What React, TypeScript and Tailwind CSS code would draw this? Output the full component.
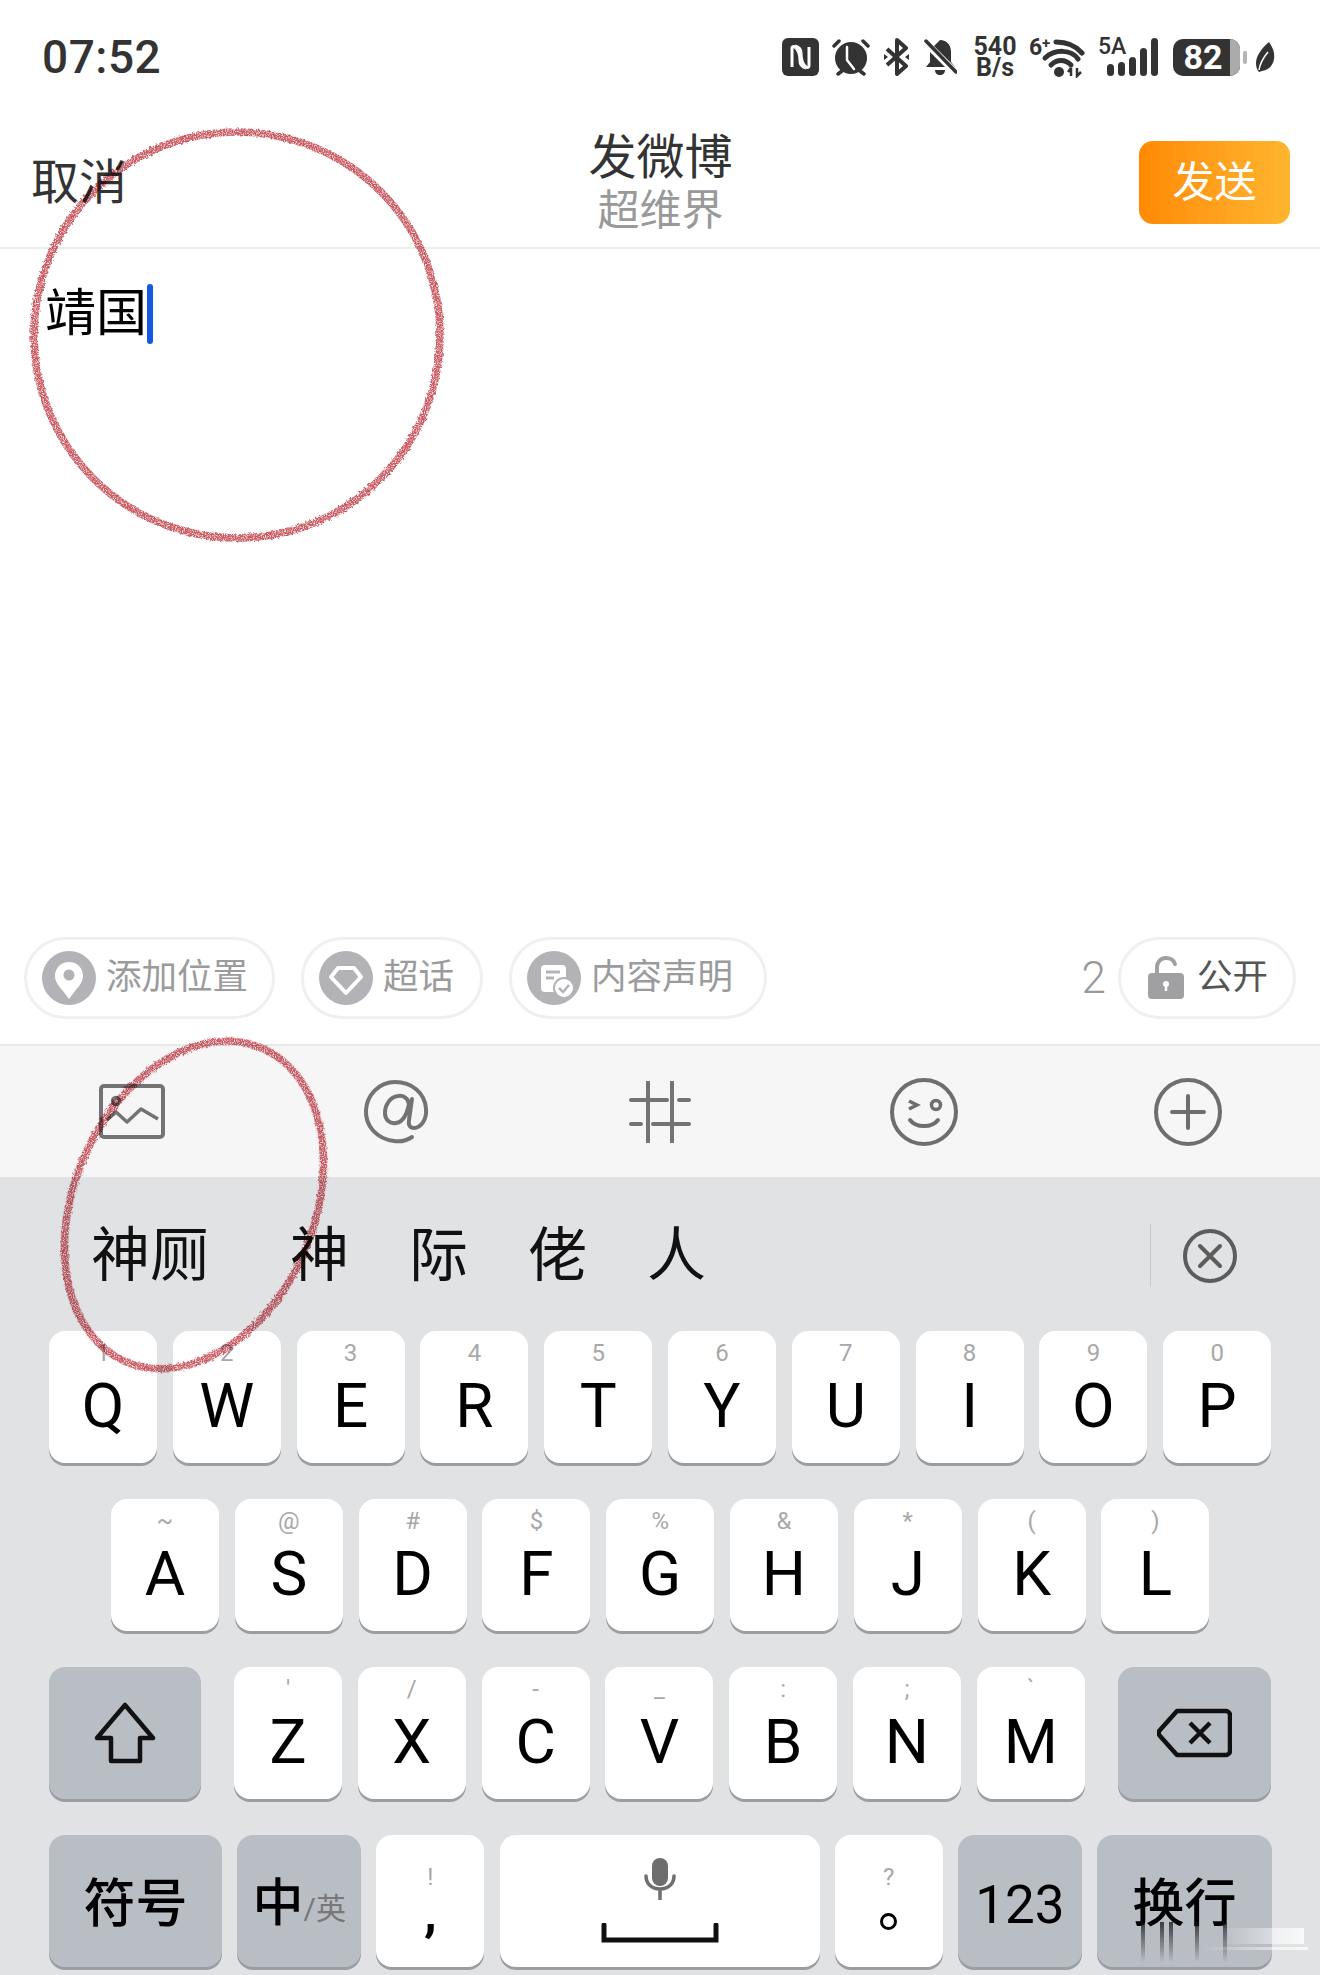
import type { ReactNode } from "react";

const row1 = [
  ["1", "Q"], ["2", "W"], ["3", "E"], ["4", "R"], ["5", "T"],
  ["6", "Y"], ["7", "U"], ["8", "I"], ["9", "O"], ["0", "P"],
];
const row2 = [
  ["~", "A"], ["@", "S"], ["#", "D"], ["$", "F"], ["%", "G"],
  ["&", "H"], ["*", "J"], ["(", "K"], [")", "L"],
];
const row3 = [
  ["'", "Z"], ["/", "X"], ["-", "C"], ["_", "V"], [":", "B"], [";", "N"], ["`", "M"],
];

function LetterKey({ hint, letter }: { hint: string; letter: string }) {
  return (
    <div className="flex h-[132px] w-[108px] shrink-0 flex-col items-center rounded-[16px] bg-white pt-2 shadow-[0_3px_0_#9b9da3]">
      <span className="h-7 text-[24px] leading-7 text-[#a8a8a8]">{hint}</span>
      <span className="h-[78px] text-[62px] leading-[78px] text-black">{letter}</span>
    </div>
  );
}

function GrayKey({ width, children }: { width: string; children: ReactNode }) {
  return (
    <div className={`flex h-[132px] shrink-0 items-center justify-center rounded-[16px] bg-[#b9bdc4] shadow-[0_3px_0_#9b9da3] ${width}`}>
      {children}
    </div>
  );
}

function PunctKey({ hint, children }: { hint: string; children: ReactNode }) {
  return (
    <div className="flex h-[132px] w-[108px] shrink-0 flex-col items-center rounded-[16px] bg-white pt-[28px] shadow-[0_3px_0_#9b9da3]">
      <span className="h-7 text-[24px] leading-7 text-[#a8a8a8]">{hint}</span>
      {children}
    </div>
  );
}

function Chip({ icon, label, width }: { icon: ReactNode; label: string; width: string }) {
  return (
    <div className={`flex h-[82px] items-center gap-[10px] rounded-full border-[3px] border-[#f0f0f0] pl-[15px] ${width}`}>
      {icon}
      <span className="text-[35.5px] leading-none text-[#9b9b9d]">{label}</span>
    </div>
  );
}

function StatusIcons() {
  return (
    <div className="flex items-center gap-[13px]">
      {/* nfc */}
      <svg width="37" height="38" viewBox="0 0 37 38">
        <rect width="37" height="38" rx="6" fill="#333" />
        <path d="M10 29V10c0-1.500 1.500-2 3-1 4 3 5 8 5 14 0 3 2 6 6 7" fill="none" stroke="#fff" strokeWidth="3" />
        <path d="M27 9v19c0 1.500-1.500 2-3 1-4-3-5-8-5-14 0-3-2-6-6-7" fill="none" stroke="#fff" strokeWidth="3" />
      </svg>
      {/* alarm */}
      <svg width="38" height="38" viewBox="0 0 38 38">
        <circle cx="19" cy="20" r="16" fill="#333" />
        <path d="M15 9v13l7 9" fill="none" stroke="#fff" strokeWidth="2.500" strokeLinecap="round" strokeLinejoin="round" />
        <path d="M2 8l5-5M36 8l-5-5M6 36l4-3M32 36l-4-3" stroke="#333" strokeWidth="3.500" strokeLinecap="round" />
      </svg>
      {/* bluetooth */}
      <svg width="27" height="38" viewBox="0 0 27 38">
        <path d="M4 11l19 17-9 8V2l9 8L4 27" fill="none" stroke="#333" strokeWidth="4" strokeLinejoin="round" />
        <path d="M1 16l4 3-4 3zM26 16l-4 3 4 3z" fill="#333" />
      </svg>
      {/* bell off */}
      <svg width="34" height="38" viewBox="0 0 34 38">
        <path d="M17 2c7 0 11 5 11 12v10l4 5H3l4-5V12z" fill="#333" />
        <path d="M12 32h10c0 3-2 5-5 5s-5-2-5-5z" fill="#333" />
        <path d="M2 4l30 30" stroke="#fff" strokeWidth="7" />
        <path d="M3 3l30 31" stroke="#333" strokeWidth="3.500" strokeLinecap="round" />
      </svg>
      {/* speed */}
      <div className="ml-[4px] flex w-[42px] flex-col items-center text-[25px] font-bold leading-[21px] text-[#333]">
        <span>540</span>
        <span>B/s</span>
      </div>
      {/* wifi */}
      <div className="relative h-[42px] w-[56px]">
        <span className="absolute left-0 top-0 text-[23px] font-bold leading-[24px] text-[#333]">6</span>
        <span className="absolute left-[13px] top-0 text-[15px] font-bold leading-[15px] text-[#333]">+</span>
        <svg width="56" height="42" viewBox="0 0 56 42">
          <path d="M27 6c10 0 20 4 26 11" fill="none" stroke="#333" strokeWidth="5" strokeLinecap="round" />
          <path d="M16 22c10-9 26-9 33 1" fill="none" stroke="#333" strokeWidth="5" strokeLinecap="round" />
          <path d="M22 29c6-6 14-6 20 0" fill="none" stroke="#333" strokeWidth="5" strokeLinecap="round" />
          <circle cx="30" cy="36" r="5" fill="#333" />
          <path d="M42 32v8M39 36l3-4M48 32v8l4-4" fill="none" stroke="#333" strokeWidth="2.500" />
        </svg>
      </div>
      {/* signal */}
      <div className="relative h-[40px] w-[62px]">
        <span className="absolute left-0 top-0 text-[23px] font-medium leading-[20px] text-[#333]">5A</span>
        <svg width="62" height="40" viewBox="0 0 62 40">
          <rect x="9" y="27" width="7" height="12" rx="3.500" fill="#333" />
          <rect x="20" y="25" width="7" height="14" rx="3.500" fill="#333" />
          <rect x="31" y="20" width="7" height="19" rx="3.500" fill="#333" />
          <rect x="42" y="11" width="7" height="28" rx="3.500" fill="#333" />
          <rect x="53" y="1" width="7" height="38" rx="3.500" fill="#333" />
        </svg>
      </div>
      {/* battery */}
      <div className="flex items-center gap-[3px]">
        <div className="flex h-[37px] w-[67px] rounded-[10px] bg-[#333]">
          <div className="flex flex-1 items-center justify-center pl-[3px] text-[34px] font-bold leading-[37px] text-white">82</div>
          <div className="w-[10px] rounded-r-[10px] bg-[#ababab]" />
        </div>
        <div className="h-[13px] w-[4px] rounded-full bg-[#b5b5b5]" />
      </div>
      {/* leaf */}
      <svg className="-ml-[4px]" width="19" height="30" viewBox="0 0 19 30">
        <path d="M13 0c4 6 6 11 5 17-1 7-6 11-12 12l-3 1c-2-2-3-5-3-9C0 13 7 5 13 0z" fill="#333" />
        <path d="M3 28c1-7 4-12 9-18" fill="none" stroke="#fff" strokeWidth="1.500" />
      </svg>
    </div>
  );
}

export default function App() {
  return (
    <div className="relative h-[1975px] w-[1320px] overflow-hidden bg-white font-['Roboto','Noto_Sans_CJK_SC',sans-serif]">
      {/* status bar */}
      <div className="flex h-[100px] items-center justify-between pl-[42px] pr-[45px] pt-[14px]">
        <span className="text-[46px] font-medium leading-none tracking-[0.5px] text-[#333]">07:52</span>
        <StatusIcons />
      </div>

      {/* header */}
      <div className="grid h-[149px] grid-cols-[1fr_auto_1fr] items-center border-b-2 border-[#ececec] pl-[31px] pr-[30px] pt-[18px]">
        <span className="text-[48px] leading-none text-[#333]">取消</span>
        <div className="flex flex-col items-center">
          <span className="text-[48px] leading-[56px] text-[#333]">发微博</span>
          <span className="text-[42px] leading-[50px] text-[#999]">超维界</span>
        </div>
        <div className="flex h-[83px] w-[151px] items-center justify-center justify-self-end rounded-[14px] bg-gradient-to-r from-[#ff8a00] to-[#ffb52e] text-[42px] leading-none text-white">
          发送
        </div>
      </div>

      {/* editor */}
      <div className="h-[688px] pl-[45px] pt-[35px]">
        <div className="flex items-center">
          <span className="text-[51px] leading-[60px] text-black">靖国</span>
          <span className="h-[60px] w-[6px] rounded-full bg-[#1558e6]" />
        </div>
      </div>

      {/* chips */}
      <div className="flex h-[107px] items-start justify-between pl-[24px] pr-[24px]">
        <div className="flex gap-[26px]">
          <Chip
            width="w-[251px]"
            label="添加位置"
            icon={
              <svg width="54" height="54" viewBox="0 0 54 54">
                <circle cx="27" cy="27" r="27" fill="#b3b3b7" />
                <path d="M27 11c-8 0-14 6-14 14 0 6 4 10 8 15l6 8 6-8c4-5 8-9 8-15 0-8-6-14-14-14z" fill="#fff" />
                <circle cx="27" cy="24" r="5.500" fill="#b3b3b7" />
              </svg>
            }
          />
          <Chip
            width="w-[182px]"
            label="超话"
            icon={
              <svg width="54" height="54" viewBox="0 0 54 54">
                <circle cx="27" cy="27" r="27" fill="#b3b3b7" />
                <path d="M19 17h16l7 9-15 16-15-16z" fill="none" stroke="#fff" strokeWidth="4" strokeLinejoin="round" />
              </svg>
            }
          />
          <Chip
            width="w-[258px]"
            label="内容声明"
            icon={
              <svg width="54" height="54" viewBox="0 0 54 54">
                <circle cx="27" cy="27" r="27" fill="#b3b3b7" />
                <rect x="14" y="14" width="25" height="27" rx="4" fill="#fff" />
                <path d="M19 21h14M19 27h8" stroke="#b3b3b7" strokeWidth="3" />
                <circle cx="37" cy="37" r="10" fill="#fff" stroke="#b3b3b7" strokeWidth="2" />
                <path d="M32 37l4 4 6-7" fill="none" stroke="#b3b3b7" strokeWidth="2.500" />
              </svg>
            }
          />
        </div>
        <div className="flex items-center gap-[12px]">
          <span className="text-[44px] font-light leading-[82px] text-[#999]">2</span>
          <div className="flex h-[82px] w-[178px] items-center gap-[12px] rounded-full border-[3px] border-[#f0f0f0] pl-[26px]">
            <svg width="38" height="44" viewBox="0 0 38 44">
              <path d="M10 18v-7c0-5 4-9 9-9 4 0 8 2 9 6" fill="none" stroke="#a0a0a3" strokeWidth="4" strokeLinecap="round" />
              <rect x="1" y="17" width="36" height="26" rx="4" fill="#a0a0a3" />
              <circle cx="19" cy="28" r="3" fill="#fff" />
              <path d="M19 29v6" stroke="#fff" strokeWidth="2.500" />
            </svg>
            <span className="text-[35.5px] leading-none text-[#555]">公开</span>
          </div>
        </div>
      </div>

      {/* toolbar */}
      <div className="flex h-[133px] items-center border-t-2 border-[#e8e8e8] bg-[#f6f6f6]">
        <div className="flex w-[264px] justify-center">
          <svg width="66" height="55" viewBox="0 0 66 55">
            <rect x="2" y="2" width="62" height="51" rx="3" fill="none" stroke="#737373" strokeWidth="4" />
            <circle cx="17" cy="17" r="3.500" fill="none" stroke="#737373" strokeWidth="3.500" />
            <path d="M8 36l9-8 11 10 14-13 17 10" fill="none" stroke="#737373" strokeWidth="3.500" strokeLinejoin="round" />
          </svg>
        </div>
        <div className="flex w-[264px] justify-center">
          <svg width="66" height="66" viewBox="0 0 66 66">
            <path d="M49 58c-6 4-12 5-18 4C14 60 2 47 3 31 4 16 16 3 32 3c17 0 30 11 31 27 1 10-5 19-12 19-4 0-6-3-5-8l3-21M46 25c-1-6-6-9-11-8-8 1-13 9-13 17 0 7 5 11 11 10 7-1 11-9 13-19z" fill="none" stroke="#737373" strokeWidth="4" strokeLinecap="round" />
          </svg>
        </div>
        <div className="flex w-[264px] justify-center">
          <svg width="62" height="62" viewBox="0 0 62 62">
            <path d="M19 1v60M43 1v60" stroke="#737373" strokeWidth="4" strokeLinecap="round" />
            <path d="M2 19h36M50 19h10M2 43h10M24 43h36" stroke="#737373" strokeWidth="4" strokeLinecap="round" />
          </svg>
        </div>
        <div className="flex w-[264px] justify-center">
          <svg width="68" height="68" viewBox="0 0 68 68">
            <circle cx="34" cy="34" r="32" fill="none" stroke="#6e6e6e" strokeWidth="4" />
            <path d="M19 23l8 4-8 4" fill="none" stroke="#6e6e6e" strokeWidth="3.500" />
            <circle cx="46" cy="27" r="4.500" fill="none" stroke="#6e6e6e" strokeWidth="3.500" />
            <path d="M20 42c6 8 22 8 28 0" fill="none" stroke="#6e6e6e" strokeWidth="4" strokeLinecap="round" />
          </svg>
        </div>
        <div className="flex w-[264px] justify-center">
          <svg width="68" height="68" viewBox="0 0 68 68">
            <circle cx="34" cy="34" r="32" fill="none" stroke="#6e6e6e" strokeWidth="4" />
            <path d="M18 34h32M34 18v32" stroke="#6e6e6e" strokeWidth="4" strokeLinecap="round" />
          </svg>
        </div>
      </div>

      {/* keyboard */}
      <div className="h-[798px] bg-[#e1e2e4]">
        {/* candidates */}
        <div className="flex h-[154px] items-center pl-[91px] pt-[3px] text-[59px] leading-none text-[#111]">
          <div className="flex gap-[60px]">
            <span className="mr-[21px]">神厕</span>
            <span>神</span>
            <span>际</span>
            <span>佬</span>
            <span>人</span>
          </div>
          <div className="ml-auto flex items-center pr-[83px]">
            <div className="h-[63px] w-px bg-[#c8c9cc]" />
            <svg className="ml-[32px]" width="54" height="54" viewBox="0 0 54 54">
              <circle cx="27" cy="27" r="25" fill="none" stroke="#5c5c5c" strokeWidth="4" />
              <path d="M17 17l20 20M37 17L17 37" stroke="#5c5c5c" strokeWidth="4" strokeLinecap="round" />
            </svg>
          </div>
        </div>

        <div className="flex flex-col gap-[36px]">
          <div className="flex gap-[15.8px] pl-[49px]">
            {row1.map(([hint, letter]) => (
              <LetterKey key={letter} hint={hint} letter={letter} />
            ))}
          </div>
          <div className="flex gap-[15.8px] pl-[111px]">
            {row2.map(([hint, letter]) => (
              <LetterKey key={letter} hint={hint} letter={letter} />
            ))}
          </div>
          <div className="flex pl-[49px]">
            <GrayKey width="w-[152px]">
              <svg width="62" height="62" viewBox="0 0 62 62">
                <path d="M31 3l28 33H46v23H17V36H3z" fill="none" stroke="#111" strokeWidth="4.500" strokeLinejoin="round" />
              </svg>
            </GrayKey>
            <div className="ml-[33px] flex gap-[15.8px]">
              {row3.map(([hint, letter]) => (
                <LetterKey key={letter} hint={hint} letter={letter} />
              ))}
            </div>
            <div className="ml-[33px]">
              <GrayKey width="w-[153px]">
                <svg width="75" height="50" viewBox="0 0 75 50">
                  <path d="M20 3h49c2 0 4 2 4 4v36c0 2-2 4-4 4H20L3 28c-2-2-2-4 0-6z" fill="none" stroke="#111" strokeWidth="4.500" strokeLinejoin="round" />
                  <path d="M33 15l20 20M53 15L33 35" stroke="#111" strokeWidth="4.500" />
                </svg>
              </GrayKey>
            </div>
          </div>
          <div className="flex gap-[15.2px] pl-[49px]">
            <GrayKey width="w-[173px]">
              <span className="pt-[8px] text-[52px] font-medium leading-none text-black">符号</span>
            </GrayKey>
            <GrayKey width="w-[124px]">
              <span className="pt-[4px] text-[51px] font-medium leading-none text-black">中</span>
              <span className="mt-[16px] text-[30px] leading-none text-[#777]">/英</span>
            </GrayKey>
            <PunctKey hint="!">
              <span className="-mt-[4px] text-[52px] font-bold leading-[52px] text-black">,</span>
            </PunctKey>
            <div className="flex h-[132px] w-[320px] shrink-0 flex-col items-center rounded-[16px] bg-white pt-[23px] shadow-[0_3px_0_#9b9da3]">
              <svg width="32" height="42" viewBox="0 0 32 42">
                <rect x="8" y="0" width="16" height="28" rx="8" fill="#6e6e6e" />
                <path d="M2 18c0 8 6 13 14 13s14-5 14-13M16 31v10" fill="none" stroke="#6e6e6e" strokeWidth="3.500" strokeLinecap="round" />
              </svg>
              <svg className="mt-[23px]" width="118" height="20" viewBox="0 0 118 20">
                <path d="M3 2v15h112V2" fill="none" stroke="#111" strokeWidth="5" strokeLinecap="round" />
              </svg>
            </div>
            <PunctKey hint="?">
              <span className="mt-[22px] h-[17px] w-[17px] rounded-full border-[3px] border-black" />
            </PunctKey>
            <GrayKey width="w-[124px]">
              <span className="pt-[8px] text-[53px] leading-none text-black">123</span>
            </GrayKey>
            <GrayKey width="w-[175px]">
              <span className="pt-[8px] text-[52px] font-medium leading-none text-black">换行</span>
            </GrayKey>
          </div>
        </div>
      </div>

      {/* pencil circles drawn on top of the screenshot */}
      <svg className="pointer-events-none absolute inset-0 mix-blend-multiply" width="1320" height="1975" viewBox="0 0 1320 1975">
        <defs>
          <filter id="pencil" x="-5%" y="-5%" width="110%" height="110%">
            <feTurbulence type="fractalNoise" baseFrequency="0.35" numOctaves="2" seed="4" result="wobble" />
            <feDisplacementMap in="SourceGraphic" in2="wobble" scale="4" result="line" />
            <feTurbulence type="fractalNoise" baseFrequency="0.9" numOctaves="2" seed="9" />
            <feColorMatrix values="0 0 0 0 0  0 0 0 0 0  0 0 0 0 0  0 0 0 2.600 -0.500" result="grain" />
            <feComposite in="line" in2="grain" operator="in" />
          </filter>
        </defs>
        <g filter="url(#pencil)" fill="none" stroke="#c4454f" strokeOpacity="0.9" strokeWidth="7.500">
          <ellipse cx="237" cy="335" rx="203" ry="203" />
          <ellipse cx="194" cy="1205" rx="120" ry="171" transform="rotate(23.600 194 1205)" />
        </g>
      </svg>

      {/* watermark smear, bottom right */}
      <svg className="pointer-events-none absolute inset-0" width="1320" height="1975" viewBox="0 0 1320 1975">
        <defs>
          <linearGradient id="smear" x1="0" y1="0" x2="0" y2="1">
            <stop offset="0" stopColor="#111" stopOpacity="0.75" />
            <stop offset="1" stopColor="#111" stopOpacity="0" />
          </linearGradient>
          <linearGradient id="patch" x1="0" y1="0" x2="1" y2="0">
            <stop offset="0" stopColor="#fff" stopOpacity="0" />
            <stop offset="1" stopColor="#fff" stopOpacity="0.75" />
          </linearGradient>
        </defs>
        <rect x="1141" y="1922" width="4" height="40" fill="url(#smear)" />
        <rect x="1160" y="1922" width="4" height="40" fill="url(#smear)" />
        <rect x="1169" y="1922" width="4" height="40" fill="url(#smear)" />
        <rect x="1195" y="1922" width="4" height="40" fill="url(#smear)" />
        <rect x="1223" y="1922" width="4" height="40" fill="url(#smear)" />
        <rect x="1220" y="1928" width="84" height="16" fill="url(#patch)" />
        <rect x="1200" y="1947" width="108" height="3" fill="url(#patch)" />
      </svg>
    </div>
  );
}
